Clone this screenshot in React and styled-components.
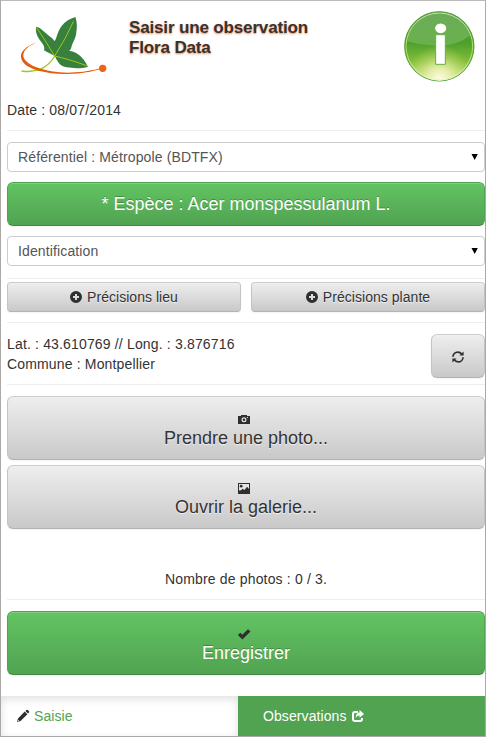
import React from 'react';
import styled, { createGlobalStyle, css } from 'styled-components';

const GlobalStyle = createGlobalStyle`
  *, *::before, *::after { box-sizing: border-box; }
  body {
    margin: 0;
    background: #fff;
    color: #333;
    font: 14px/20px "Liberation Sans", Arial, sans-serif;
  }
`;

const Frame = styled.div`
  display: flex;
  flex-direction: column;
  width: 486px;
  height: 737px;
  border: 1px solid #aca8a4;
  border-top-color: #bbb;
  overflow: hidden;
`;

const Header = styled.header`
  display: flex;
  align-items: flex-start;
  height: 99px;
  padding: 9px 10px 0 14px;
`;

const Title = styled.h1`
  flex: 1;
  margin: 8px 0 0 18px;
  font-size: 17px;
  line-height: 20px;
  font-weight: bold;
  letter-spacing: -0.15px;
  text-shadow: 0 1px 2px rgba(238, 110, 40, 0.85);
`;

const InfoIcon = styled.svg`
  width: 72px;
  height: 72px;
  margin-top: 1px;
`;

const Content = styled.main`
  display: flex;
  flex-direction: column;
  height: 596px;
  padding-left: 6px;
`;

const Rule = styled.hr`
  flex: none;
  width: 100%;
  height: 1px;
  margin: ${(p) => p.$m};
  border: 0;
  background: #eee;
`;

const Text = styled.div`
  line-height: 20px;
  letter-spacing: 0.16px;
  text-align: ${(p) => (p.$center ? 'center' : 'left')};
`;

const Select = styled.div`
  display: flex;
  flex: none;
  align-items: center;
  justify-content: space-between;
  height: 30px;
  padding: 0 6px 0 10px;
  border: 1px solid #ccc;
  border-radius: 4px;
  color: #555;
  letter-spacing: 0.13px;
`;

const Arrow = styled.svg`
  width: 7px;
  height: 6px;
  fill: #000;
`;

const grey = css`
  color: #333;
  border-color: #ccc #c4c4c4 #b3b3b3;
  background: linear-gradient(#eee, #c9c9c9);
  text-shadow: 0 1px 1px rgba(255, 255, 255, 0.75);
`;

const green = css`
  color: #fff;
  border-color: #51a351 #51a351 #438943;
  background: linear-gradient(#62c462, #51a351);
  text-shadow: 0 -1px 0 rgba(0, 0, 0, 0.25);
`;

const Glyph = styled.svg`
  flex: none;
  width: 14px;
  height: 14px;
  color: ${(p) => p.$color || '#2f2f2f'};
  fill: currentColor;
`;

const Button = styled.button`
  display: flex;
  flex: none;
  align-items: center;
  justify-content: center;
  gap: 4px;
  width: ${(p) => p.$w || '100%'};
  height: ${(p) => p.$h}px;
  padding: 0;
  border: 1px solid;
  border-radius: ${(p) => (p.$h > 40 ? 6 : 4)}px;
  font: ${(p) => (p.$large ? 18 : 14)}px/20px "Liberation Sans", Arial, sans-serif;
  letter-spacing: ${(p) => (p.$large ? 0 : '0.04px')};
  box-shadow: inset 0 1px 0 rgba(255, 255, 255, 0.2), 0 1px 2px rgba(0, 0, 0, 0.05);
  ${(p) => (p.$green ? green : grey)}

  ${Glyph} {
    margin-left: -1px;
  }
`;

const StackButton = styled(Button)`
  flex-direction: column;
  gap: 2px;
  padding-top: 4px;

  ${Glyph} {
    margin: 0 4px 0 0;
  }
`;

const RefreshButton = styled(Button)`
  padding-top: 2px;

  ${Glyph} {
    margin: 0;
  }
`;

const Split = styled.div`
  display: flex;
  flex: none;
  justify-content: space-between;
  height: ${(p) => p.$h}px;
`;

const Spaced = styled.div`
  padding: 10px 0;
`;

const Uploads = styled.div`
  display: flex;
  flex-direction: column;
  gap: 5px;
  margin-bottom: 40px;
`;

const Footer = styled.footer`
  display: flex;
  height: 40px;
`;

const Tab = styled.div`
  display: flex;
  align-items: center;
  height: 40px;
  gap: 4px;
  letter-spacing: 0.09px;
  ${(p) =>
    p.$active
      ? css`
          width: 237px;
          padding-left: 15px;
          color: #51a351;
          box-shadow: inset 0 3px 8px rgba(0, 0, 0, 0.125);
        `
      : css`
          flex: 1;
          padding-left: 25px;
          color: #fff;
          background: #51a351;
        `}
`;

const Logo = styled.svg`
  width: 96px;
  height: 70px;
`;

const LeafLogo = () => (
  <Logo viewBox="45 30 288 210">
    <path fill="#37803e" d="M164 168 C151 160 139 157 132 151 C137 138 124 127 117 116 C108 102 107 91 108 80 C120 82 127 90 137 99 C148 110 157 113 163 123 C169 119 170 104 178 89 C190 67 205 58 226 51 C232 68 231 82 229 96 C228 114 220 124 215 138 C213 148 210 154 204 152 C225 153 249 167 264 200 C245 206 219 205 200 202 C180 199 174 187 164 168Z" />
    <g fill="none" stroke="#9fc61b" strokeLinecap="round">
      <path strokeWidth="3" d="M110 83 Q137 123 164 168 Q198 115 220 65 M164 168 Q205 177 260 197" />
      <path strokeWidth="4" d="M164 168 C145 202 110 220 66 213" />
    </g>
    <path fill="#e65a0d" d="M108 128 C78 138 61 155 63 171 C66 205 128 222 204 222 C245 221 276 215 302 207 L301 205 C265 215 233 218 204 218 C134 217 73 195 70 168 C69 151 83 139 108 128Z" />
    <circle cx="308" cy="205" r="11" fill="#ee6412" />
  </Logo>
);

const Info = () => (
  <InfoIcon viewBox="39 33 216 216">
    <defs>
      <linearGradient id="ball" x1="0" y1="0" x2="0" y2="1">
        <stop offset="0" stopColor="#4c9c38" />
        <stop offset="0.45" stopColor="#4da02b" />
        <stop offset="0.72" stopColor="#83bd3b" />
        <stop offset="1" stopColor="#d5e698" />
      </linearGradient>
      <radialGradient id="glow" cx="0.5" cy="0.98" r="0.5">
        <stop offset="0" stopColor="#fdfde6" />
        <stop offset="0.35" stopColor="#ebf1b0" stopOpacity="0.85" />
        <stop offset="1" stopColor="#b8da50" stopOpacity="0" />
      </radialGradient>
      <linearGradient id="rim" x1="0" y1="0" x2="0" y2="1">
        <stop offset="0" stopColor="#c5e5a9" />
        <stop offset="0.6" stopColor="#a6e258" />
        <stop offset="1" stopColor="#f0f6c8" />
      </linearGradient>
    </defs>
    <circle cx="148" cy="139" r="104" fill="url(#ball)" stroke="#4b9c39" strokeWidth="3" />
    <circle cx="148" cy="139" r="103" fill="url(#glow)" />
    <path fill="#fff" opacity="0.17" d="M51 124 C55 71 98 40 148 40 C198 40 239 72 242 104 C215 129 168 140 125 136 C94 134 70 130 51 124Z" />
    <circle cx="148" cy="139" r="100" fill="none" stroke="url(#rim)" strokeWidth="3" />
    <g fill="#fff" stroke="#69ac43" strokeWidth="3">
      <ellipse cx="152" cy="85" rx="18" ry="16" />
      <path d="M137 104H166V193H137Z" />
    </g>
  </InfoIcon>
);

const PlusGlyph = () => (
  <Glyph viewBox="0 0 14 14">
    <path fillRule="evenodd" d="M7 1a6 6 0 1 0 0 12a6 6 0 1 0 0-12M6 4h2v2h2v2H8v2H6V8H4V6h2z" />
  </Glyph>
);

const RefreshGlyph = () => (
  <Glyph viewBox="0 0 14 14">
    <g fill="none" stroke="currentColor" strokeWidth="1.7">
      <path d="M1.9 6.8C2.1 4 4.3 2.1 6.8 2.1C8.7 2.1 9.9 3 11 4.2" />
      <path d="M12.1 7.2C11.9 10 9.7 11.9 7.2 11.9C5.3 11.9 4.1 11 3 9.8" />
    </g>
    <path d="M12.6 1.4V5.6H8.4zM1.4 12.6V8.4H5.6z" />
  </Glyph>
);

const CameraGlyph = () => (
  <Glyph viewBox="0 0 14 14">
    <path d="M1 4h3V3h6v1h3v8H1z" />
    <circle cx="7" cy="7.8" r="1.9" fill="none" stroke="#e3e3e3" strokeWidth="1.2" />
    <path fill="#ddd" d="M10 5h1v1h-1z" />
  </Glyph>
);

const PictureGlyph = () => (
  <Glyph viewBox="0 0 14 14">
    <path d="M1 2h12v11H1z" />
    <path fill="#e5e5e5" d="M2 3h10v5l-2-2.3L7.5 9 5.7 7.7 4 9.3 2 9.6z" />
    <circle cx="4.2" cy="5.2" r="1.4" />
  </Glyph>
);

const CheckGlyph = () => (
  <Glyph viewBox="0 0 14 14">
    <path d="M.9 8l2.4-2.2L5.2 7.7l5.8-5.5L13.5 4.4 5.4 12.6z" />
  </Glyph>
);

const PencilGlyph = () => (
  <Glyph viewBox="0 0 14 14">
    <path d="M1 13l1-3.6L8.7 2.6l2.7 2.7L4.6 12zM9.4 1.9l1-1q.6-.5 1.4.1l1.2 1.2q.5.7 0 1.3l-1 1z" />
    <path fill="#fff" d="M2 10.8l1.2 1.2-.8.2-.6-.6z" />
  </Glyph>
);

const ShareGlyph = () => (
  <Glyph viewBox="0 0 14 14" $color="#fff">
    <path fill="none" stroke="currentColor" strokeWidth="2" d="M7 3H4Q2 3 2 5v5q0 2 2 2h5q2 0 2-2V9" />
    <path d="M8.5 1L13 5 8.5 8.8V6.6Q6 6.5 4.7 9 4.6 3.8 8.5 3.4z" />
  </Glyph>
);

const Dropdown = ({ children }) => (
  <Select>
    {children}
    <Arrow viewBox="0 0 7 6"><path d="M.5 0h6.3L3.7 6z" /></Arrow>
  </Select>
);

export default function App() {
  return (
    <>
      <GlobalStyle />
      <Frame>
        <Header>
          <LeafLogo />
          <Title>Saisir une observation<br />Flora Data</Title>
          <Info />
        </Header>
        <Content>
          <Text>Date : 08/07/2014</Text>
          <Rule $m="10px 0 11px" />
          <Dropdown>Référentiel : Métropole (BDTFX)</Dropdown>
          <Spaced>
            <Button $green $large $h={44}>* Espèce : Acer monspessulanum L.</Button>
          </Spaced>
          <Dropdown>Identification</Dropdown>
          <Rule $m="12px 0 3px" />
          <Split $h={30}>
            <Button $w="234px" $h={30}><PlusGlyph />Précisions lieu</Button>
            <Button $w="234px" $h={30}><PlusGlyph />Précisions plante</Button>
          </Split>
          <Rule $m="10px 0 11px" />
          <Split $h={44}>
            <Text>Lat. : 43.610769 // Long. : 3.876716<br />Commune : Montpellier</Text>
            <RefreshButton $w="54px" $h={44}><RefreshGlyph /></RefreshButton>
          </Split>
          <Rule $m="6px 0 11px" />
          <Uploads>
            <StackButton $large $h={64}><CameraGlyph />Prendre une photo...</StackButton>
            <StackButton $large $h={64}><PictureGlyph />Ouvrir la galerie...</StackButton>
          </Uploads>
          <Text $center>Nombre de photos : 0 / 3.</Text>
          <Rule $m="10px 0 11px" />
          <StackButton $green $large $h={64}><CheckGlyph />Enregistrer</StackButton>
        </Content>
        <Footer>
          <Tab $active><PencilGlyph />Saisie</Tab>
          <Tab>Observations<ShareGlyph /></Tab>
        </Footer>
      </Frame>
    </>
  );
}
